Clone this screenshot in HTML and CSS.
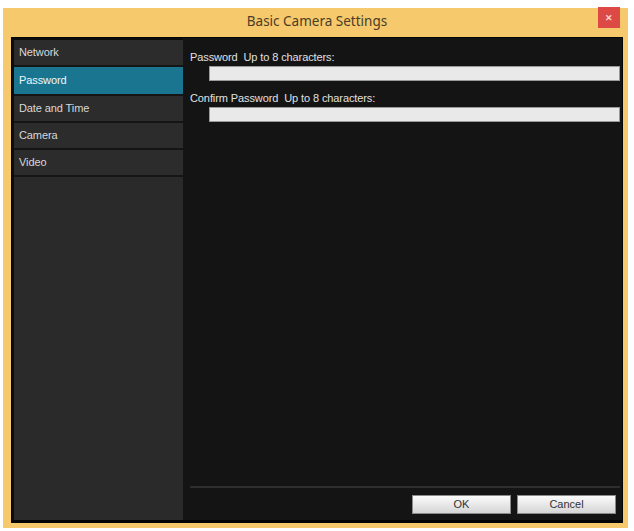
FILE: index.html
```html
<!DOCTYPE html>
<html>
<head>
<meta charset="utf-8">
<link rel="stylesheet" href="styles.css">
</head>
<body>
<div class="window">
  <div class="titlebar">
    <span class="title">Basic Camera Settings</span>
    <span class="close">&#x2715;</span>
  </div>
  <div class="client">
    <div class="sidebar">
      <div class="item">Network</div>
      <div class="item active">Password</div>
      <div class="item">Date and Time</div>
      <div class="item">Camera</div>
      <div class="item">Video</div>
    </div>
    <div class="main">
      <div class="fields">
        <div class="label">Password&nbsp; Up to 8 characters:</div>
        <div class="input"></div>
        <div class="label">Confirm Password&nbsp; Up to 8 characters:</div>
        <div class="input"></div>
      </div>
      <div class="footer">
        <button class="btn">OK</button>
        <button class="btn">Cancel</button>
      </div>
    </div>
  </div>
</div>
</body>
</html>
```
FILE: styles.css
```css
html, body {
  margin: 0;
  padding: 0;
  background: #ffffff;
}
body {
  padding: 8px 6px 3px 3px;
  font-family: "Liberation Sans", Arial, sans-serif;
}
.window {
  width: 625px;
  height: 520px;
  background: #f6c96c;
  display: flex;
  flex-direction: column;
  padding: 0 5px 5px 8px;
  box-sizing: border-box;
}
.titlebar {
  height: 29px;
  position: relative;
  display: flex;
  align-items: center;
  justify-content: center;
}
.title {
  font-family: "Noto Sans", "Open Sans", sans-serif;
  font-size: 13.5px;
  color: #4a3d28;
  margin-top: -3px;
}
.close {
  position: absolute;
  right: 3px;
  top: -1px;
  width: 22px;
  height: 21px;
  background: #dd4a46;
  color: #f6d6d2;
  font-size: 9px;
  font-weight: bold;
  display: flex;
  align-items: center;
  justify-content: center;
}
.client {
  flex: 1;
  display: flex;
  background: #0c0c0c;
  border: 1px solid #050505;
  border-bottom-width: 3px;
}
.sidebar {
  width: 169px;
  margin: 2px 0 0 2px;
  background: #2a2a2a;
  display: flex;
  flex-direction: column;
}
.item {
  height: 25px;
  border-bottom: 2px solid #151515;
  background: #2c2c2c;
  color: #d8d8d8;
  font-size: 11px;
  padding-left: 5px;
  line-height: 24px;
  letter-spacing: -0.1px;
}
.item.active {
  background: #1a7690;
  color: #eef6fa;
  height: 27px;
  line-height: 26px;
}
.main {
  flex: 1;
  background: #141414;
  display: flex;
  flex-direction: column;
  padding: 0 2px 0 7px;
}
.fields {
  flex: 1;
  padding-top: 12px;
}
.label {
  font-size: 11px;
  color: #e0e0e0;
  height: 14px;
  line-height: 14px;
  letter-spacing: -0.1px;
}
.input {
  margin: 2px 0 10px 19px;
  height: 13px;
  background: #e9e9e9;
  border: 1px solid #9a9a9a;
}
.footer {
  border-top: 2px solid #2e2e2e;
  height: 32px;
  display: flex;
  justify-content: flex-end;
  align-items: center;
  gap: 6px;
  padding-right: 4px;
  margin-bottom: 0;
}
.btn {
  width: 99px;
  height: 19px;
  border: 1px solid #8a8a8a;
  background: linear-gradient(#fbfbfb, #e8e8e8 50%, #d6d6d6);
  font-family: "Liberation Sans", Arial, sans-serif;
  font-size: 11px;
  color: #333;
  padding: 0;
}
```
